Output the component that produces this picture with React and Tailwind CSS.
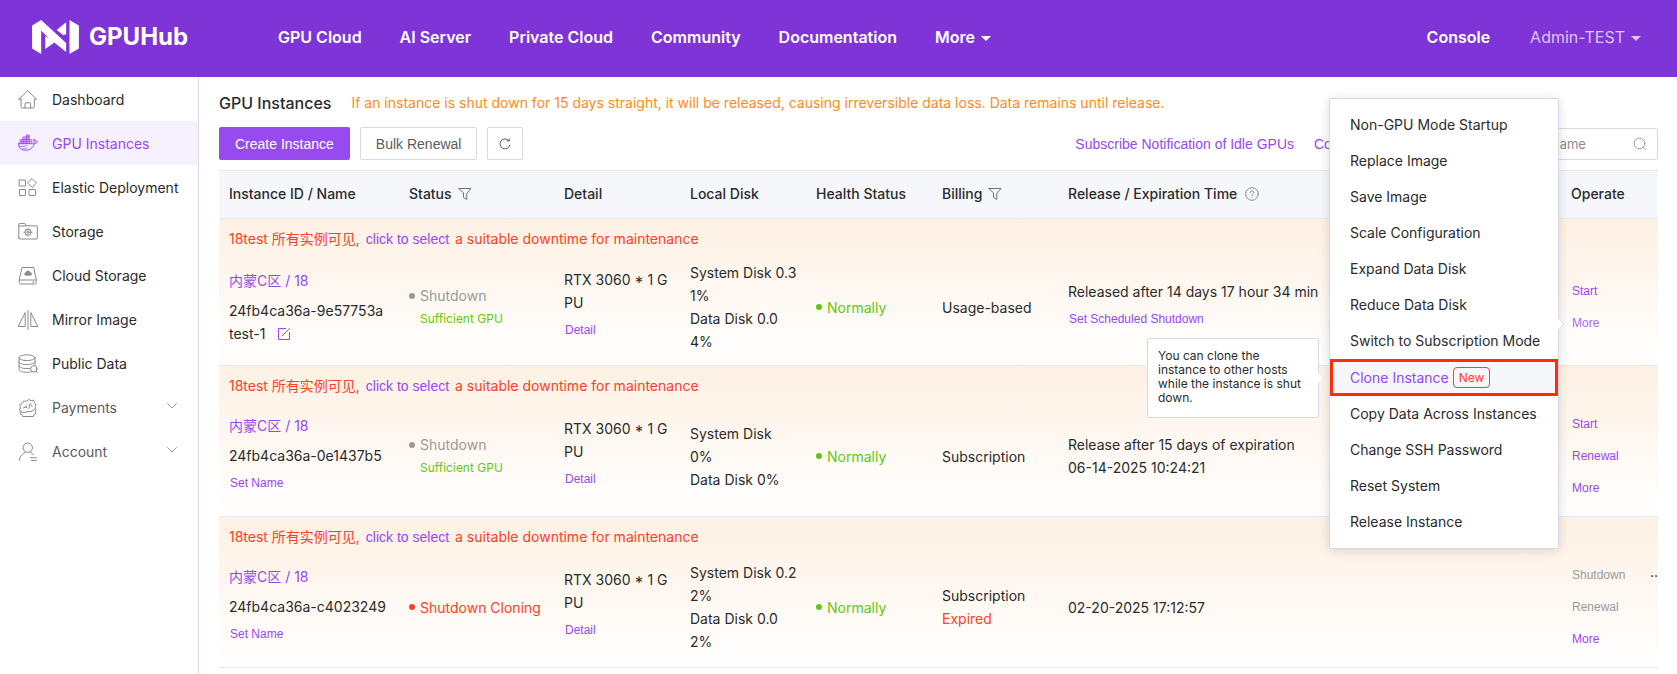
import React from "react";

const sans = "font-['Inter','Noto_Sans_CJK_SC',sans-serif]";
const link = "font-['Liberation_Sans',sans-serif] cursor-pointer";

function Icon({ children, className = "h-5 w-5", box = "0 0 20 20" }) {
  return (
    <svg viewBox={box} className={className} fill="none" stroke="currentColor" strokeWidth="1" strokeLinecap="round" strokeLinejoin="round" aria-hidden="true">
      {children}
    </svg>
  );
}

const HomeIcon = () => (
  <Icon>
    <path d="M.8 9.2 9.7.8l8.9 8.4H16.300v7.300a1.500 1.500 0 0 1-1.500 1.500H4.600A1.500 1.500 0 0 1 3.100 16.500V9.200Z" />
    <path d="M7 18v-4.200a1 1 0 0 1 1-1h3.600a1 1 0 0 1 1 1V18" />
  </Icon>
);

const DockerIcon = () => (
  <Icon>
    <path d="M.6 9.700h14.200c1 0 1.500-.6 1.400-1.500-.1-1-.6-1.600-.3-3 1 .5 1.500 1.200 1.600 2 .8-.2 1.600 0 2.100.5-.5 1.200-1.600 1.700-3 1.700C15 14 12 16.200 7.600 16.200c-4.700 0-7.200-2.400-7-6.500Z" />
    <path d="M1 12.400c3 .4 5.500.3 7.500-.8M4.500 15c2 0 3.500-.5 4.500-1.500" strokeWidth=".7" />
    <path d="M2.500 5.500h9v3.700h-9Z M5.200 3h6v2.500h-6Z M8.700 1h2.500v2H8.700Z" fill="currentColor" fillOpacity=".45" strokeWidth=".7" />
    <path d="M2.500 7.400h11.300v1.800M5.200 5.500v3.700M8.400 3v6.200M11.500 5.500h2.300v2" strokeWidth=".7" />
  </Icon>
);

const ElasticIcon = () => (
  <Icon>
    <rect x="1.500" y="2" width="6" height="6" />
    <path d="m14.200.8 4.300 4.300-4.300 4.300-4.300-4.300Z" />
    <rect x="1.500" y="11.500" width="6" height="6" rx=".5" />
    <rect x="11" y="11.500" width="6.500" height="6" rx=".5" />
  </Icon>
);

const StorageIcon = () => (
  <Icon>
    <path d="M.8 16V2.500a1 1 0 0 1 1-1h5l1.500 2.300h10a1 1 0 0 1 1 1V16a1 1 0 0 1-1 1H1.800a1 1 0 0 1-1-1ZM.8 4h7.500" />
    <circle cx="10" cy="10.300" r="3" />
    <circle cx="10" cy="10.300" r="1.100" />
    <path d="M10 6.300v1M10 13.300v1M6 10.300h1M13 10.300h1M7.200 7.500l.7.700M12.100 12.400l.7.700M12.800 7.500l-.7.700M7.900 12.400l-.7.700" />
  </Icon>
);

const DiskIcon = () => (
  <Icon>
    <path d="M4.500 1.500h11.200l2.500 12v3a1.500 1.500 0 0 1-1.500 1.500H2.800a1.500 1.500 0 0 1-1.500-1.500v-3Z" />
    <path d="M1.500 14h16.500M14.500 16.200h1.500" />
    <path d="M7.500 9.500a1.600 1.600 0 0 1 .2-3.100 2.600 2.600 0 0 1 4.800 0 1.600 1.600 0 0 1 .2 3.100Z" fill="currentColor" strokeWidth=".3" />
  </Icon>
);

const MirrorIcon = () => (
  <Icon>
    <path d="M7.200 3v13.500H.6ZM10 .5v19M12.800 3v13.500h6.600Z" />
  </Icon>
);

const DataIcon = () => (
  <Icon>
    <ellipse cx="9" cy="3.700" rx="8" ry="2.900" />
    <path d="M1 3.700v12c0 1.600 3.600 2.600 8 2.600 1.700 0 3-.1 4.200-.4M17 3.700v7.500M1 7.700c0 1.600 3.600 2.900 8 2.900s8-1.300 8-2.900M1 11.700c0 1.600 3.600 2.900 8 2.900 1.200 0 2.400-.1 3.400-.3" />
    <circle cx="15.800" cy="14.800" r="3.200" />
    <path d="m18 17.200 1.500 1.500" />
  </Icon>
);

const PaymentsIcon = () => (
  <Icon>
    <path d="m2 6.500 2.500-1.200 1-2.300 2.800.3L10.800 1.500l2.300 1.200 2.500-.5.8 2.500 1.600 1.500-.8 2.500.5 2-2.200 1-1.500 1.600-3.500.2-5.700 1.300L3 13.500l-1.500-1 .8-2.800Z" />
    <path d="M3 13.500 2.500 16l2 1.200v1.300h11v-1.300l2-1.200-.3-2.500.8-1.800" />
    <path d="m10.800 10.500 1.400-5M5.500 9.800l3-1M8 7.800l.5 1.800M10 6.200h.1M13.400 7l.7 1.500" />
  </Icon>
);

const AccountIcon = () => (
  <Icon>
    <circle cx="9.800" cy="5.700" r="4.700" />
    <path d="M1.300 18.500c.6-4.400 3-7 5.900-8.200M12.500 10.300c1.300.6 2.300 1.500 3 2.600M12.500 15.800h6M13.500 18.500h5" />
  </Icon>
);

const FunnelIcon = () => (
  <Icon className="h-3.5 w-3.5 text-gray-500" box="0 0 14 14">
    <path d="M1 1.500h12L8.800 6.200v6.300L5.500 10.500V6.200Z" />
  </Icon>
);

const Caret = () => <span className="mt-0.5 border-x-5 border-t-5 border-x-transparent border-t-current" />;

const menu = [
  { label: "Dashboard", icon: HomeIcon },
  { label: "GPU Instances", icon: DockerIcon, active: true },
  { label: "Elastic Deployment", icon: ElasticIcon },
  { label: "Storage", icon: StorageIcon },
  { label: "Cloud Storage", icon: DiskIcon },
  { label: "Mirror Image", icon: MirrorIcon },
  { label: "Public Data", icon: DataIcon },
  { label: "Payments", icon: PaymentsIcon, group: true },
  { label: "Account", icon: AccountIcon, group: true },
];

const navLinks = ["GPU Cloud", "AI Server", "Private Cloud", "Community", "Documentation"];

const rows = [
  {
    id: "24fb4ca36a-9e57753a",
    name: "test-1",
    status: "Shutdown",
    available: true,
    disk: ["System Disk 0.3", "1%", "Data Disk 0.0", "4%"],
    billing: "Usage-based",
    release: ["Released after 14 days 17 hour 34 min"],
    schedule: true,
    actions: [{ label: "Start" }, { label: "More", open: true }],
  },
  {
    id: "24fb4ca36a-0e1437b5",
    status: "Shutdown",
    available: true,
    disk: ["System Disk", "0%", "Data Disk 0%"],
    billing: "Subscription",
    release: ["Release after 15 days of expiration", "06-14-2025 10:24:21"],
    actions: [{ label: "Start" }, { label: "Renewal" }, { label: "More" }],
  },
  {
    id: "24fb4ca36a-c4023249",
    status: "Shutdown Cloning",
    disk: ["System Disk 0.2", "2%", "Data Disk 0.0", "2%"],
    billing: "Subscription",
    expired: true,
    release: ["02-20-2025 17:12:57"],
    actions: [{ label: "Shutdown", disabled: true, overflow: true }, { label: "Renewal", disabled: true }, { label: "More" }],
  },
];

const operations = [
  "Non-GPU Mode Startup",
  "Replace Image",
  "Save Image",
  "Scale Configuration",
  "Expand Data Disk",
  "Reduce Data Disk",
  "Switch to Subscription Mode",
  "Clone Instance",
  "Copy Data Across Instances",
  "Change SSH Password",
  "Reset System",
  "Release Instance",
];

function Header() {
  return (
    <header className="flex h-[77px] items-center bg-[#7f34d8] pr-9 pb-[3px] pl-8 text-white">
      <a href="#" className="flex w-[246px] items-center gap-2.5 text-2xl font-bold">
        <svg viewBox="0 0 139 101" className="h-[34px] w-[47px]" fill="currentColor" aria-hidden="true">
          <path d="M0 16 27 0 101 68V95L66 67 39 86V48L50 55 27 31V101L0 85Z" />
          <path d="M101 7V42L93 45 73 30Z" />
          <path d="M111 0 139 16V85L111 101Z" />
        </svg>
        GPUHub
      </a>
      <nav className="flex flex-1 items-center gap-[38px] text-base font-semibold whitespace-nowrap">
        {navLinks.map((t) => (
          <a key={t} href="#">{t}</a>
        ))}
        <button type="button" className="flex items-center gap-1.5">
          More <Caret />
        </button>
      </nav>
      <div className="flex items-center gap-10 text-base">
        <a href="#" className="font-semibold">Console</a>
        <button type="button" className="flex items-center gap-1.5 text-[#dcc6f5]">
          Admin-TEST <Caret />
        </button>
      </div>
    </header>
  );
}

function Sidebar() {
  return (
    <aside className="w-[199px] shrink-0 border-r border-[#d9d9e3]">
      <ul>
        {menu.map(({ label, icon: ItemIcon, active, group }) => (
          <li key={label}>
            <a href="#" className={`flex h-11 items-center gap-3.5 pt-0.5 pr-5 pl-[18px] whitespace-nowrap ${active ? "bg-[#f7f0ff] text-[#9747f0]" : group ? "text-[#5c5c5c]" : "text-[#2b2b2b]"}`}>
              <span className={active ? "" : "text-[#8a8a8a]"}><ItemIcon /></span>
              <span>{label}</span>
              {group && (
                <Icon className="mb-1 ml-auto h-2 w-3 text-[#999]" box="0 0 12 8">
                  <path d="M1.500 1.500 6 6l4.500-4.500" />
                </Icon>
              )}
            </a>
          </li>
        ))}
      </ul>
    </aside>
  );
}

function OperationsMenu() {
  return (
    <div className="absolute -top-[209px] right-full z-10 mr-3 w-[230px] rounded-xs border border-[#d6d8e3] bg-white py-2 text-sm text-[#2b2b2b] shadow-[0_2px_12px_rgba(0,0,0,0.14)]">
      <span className="absolute top-[221px] -right-[5px] h-2 w-2 rotate-45 border-t border-r border-[#e2e2ea] bg-white" />
      <ul className={sans}>
        {operations.map((label) =>
          label === "Clone Instance" ? (
            <li key={label} className="relative">
              <button type="button" className="flex h-[37px] w-full items-center gap-1 border-3 border-[#ff2d0a] bg-[#f5f7fb] px-[17px] text-[#9747f0]">
                {label}
                <span className="rounded-sm border border-[#ff4026] px-[5px] text-xs leading-[19px] text-[#ff4026]">New</span>
              </button>
              <div role="tooltip" className="absolute top-1/2 right-full mr-[11px] w-[172px] -translate-y-1/2 rounded-xs border border-[#d6d8e3] bg-white p-2.5 pb-3 text-xs leading-[14px] whitespace-normal text-[#2b2b2b]">
                <span className="absolute top-1/2 -right-[5px] -mt-1 h-2 w-2 rotate-45 border-t border-r border-[#e2e2ea] bg-white" />
                You can clone the instance to other hosts while the instance is shut down.
              </div>
            </li>
          ) : (
            <li key={label}>
              <button type="button" className="flex h-9 w-full items-center px-5 whitespace-nowrap">{label}</button>
            </li>
          )
        )}
      </ul>
    </div>
  );
}

const textLink = `${link} block h-8 px-px text-xs text-[#9747f0]`;

function Dotted({ children, tone }) {
  return (
    <span className={`flex items-center gap-[5px] ${tone}`}>
      <span className="h-1.5 w-1.5 rounded-full bg-current" />
      {children}
    </span>
  );
}

function InstanceRows({ row }) {
  const td = "border-b border-[#e6e9f2] px-2.5 whitespace-nowrap";
  return (
    <tbody className="bg-linear-to-b from-[#fef1e4] to-white leading-[23px]">
      <tr>
        <td colSpan={8} className="h-[30px] px-2.5 pt-2.5 pb-0 leading-5 text-[#ff4026]">
          18test 所有实例可见,{" "}
          <a href="#" className={`${link} mx-0.5 text-[#9747f0]`}>click to select</a> a suitable downtime for maintenance
        </td>
      </tr>
      <tr>
        <td className={td}>
          <a href="#" className="mb-[7px] block text-[#9747f0]">内蒙C区 / 18</a>
          <div>{row.id}</div>
          {row.name ? (
            <div className="flex items-center gap-3">
              {row.name}
              <button type="button" aria-label="Edit name" className="text-[#9747f0]">
                <Icon className="h-3.5 w-3.5" box="0 0 14 14">
                  <path d="M8.500 1.500h-7v11h11v-7M5 9l7.500-7.500" />
                </Icon>
              </button>
            </div>
          ) : (
            <button type="button" className={textLink}>Set Name</button>
          )}
        </td>
        <td className={td}>
          <Dotted tone={row.available ? "text-[#999]" : "text-[#ff4026]"}>{row.status}</Dotted>
          {row.available && <div className="pl-[11px] text-xs leading-[23px] text-[#5fc814]">Sufficient GPU</div>}
        </td>
        <td className={td}>
          <div>RTX 3060 * 1 G<br />PU</div>
          <button type="button" className={textLink}>Detail</button>
        </td>
        <td className={`${td} py-3`}>
          {row.disk.map((line) => (
            <div key={line}>{line}</div>
          ))}
        </td>
        <td className={td}><Dotted tone="text-[#5fc814]">Normally</Dotted></td>
        <td className={td}>
          <div>{row.billing}</div>
          {row.expired && <div className="text-[#ff4026]">Expired</div>}
        </td>
        <td className={td}>
          {row.release.map((line) => (
            <div key={line}>{line}</div>
          ))}
          {row.schedule && <button type="button" className={textLink}>Set Scheduled Shutdown</button>}
        </td>
        <td className={`${td} py-3 pr-0`}>
          {row.actions.map((a) => (
            <div key={a.label} className="relative flex items-center justify-between">
              <button type="button" disabled={a.disabled} className={`${link} h-8 px-px text-xs ${a.disabled ? "text-[#999]" : a.open ? "text-[#ac6cf3]" : "text-[#9747f0]"}`}>
                {a.label}
              </button>
              {a.overflow && <span>··</span>}
              {a.open && <OperationsMenu />}
            </div>
          ))}
        </td>
      </tr>
    </tbody>
  );
}

function InstanceTable() {
  const th = "h-[49px] border-y border-[#e6e9f2] px-2.5 pb-0.5 text-left font-medium whitespace-nowrap";
  return (
    <table className="mt-2.5 w-full table-fixed border-separate border-spacing-0">
      <colgroup>
        <col className="w-[180px]" />
        <col className="w-[155px]" />
        <col className="w-[126px]" />
        <col className="w-[126px]" />
        <col className="w-[126px]" />
        <col className="w-[126px]" />
        <col />
        <col className="w-[97px]" />
      </colgroup>
      <thead className="bg-[#f5f7fb]">
        <tr>
          <th className={th}>Instance ID / Name</th>
          <th className={th}><span className="flex items-center gap-1.5">Status <FunnelIcon /></span></th>
          <th className={th}>Detail</th>
          <th className={th}>Local Disk</th>
          <th className={th}>Health Status</th>
          <th className={th}><span className="flex items-center gap-1.5">Billing <FunnelIcon /></span></th>
          <th className={th}>
            <span className="flex items-center gap-2">
              Release / Expiration Time
              <Icon className="h-3.5 w-3.5 text-[#8a8a8a]" box="0 0 14 14">
                <circle cx="7" cy="7" r="6.300" />
                <path d="M5.200 5.500a1.800 1.800 0 1 1 2.700 1.600c-.6.4-.9.700-.9 1.300M7 10.300h.1" />
              </Icon>
            </span>
          </th>
          <th className={th}>Operate</th>
        </tr>
      </thead>
      {rows.map((row) => (
        <InstanceRows key={row.id} row={row} />
      ))}
    </table>
  );
}

export default function App() {
  return (
    <div className={`${sans} flex min-h-screen flex-col bg-white text-sm text-[#2b2b2b]`}>
      <Header />
      <div className="flex flex-1">
        <Sidebar />
        <main className="min-w-0 flex-1 pt-3 pr-[19px] pl-5">
          <div className="flex h-7 items-center gap-5">
            <h1 className="text-base font-medium">GPU Instances</h1>
            <p className="text-[#fa8c1e]">
              If an instance is shut down for 15 days straight, it will be released, causing irreversible data loss. Data remains until release.
            </p>
          </div>
          <div className="mt-2.5 flex h-[33px] items-center gap-2.5">
            <button type="button" className={`${link} h-full rounded-xs bg-[#974bee] px-4 text-white`}>Create Instance</button>
            <button type="button" className={`${link} h-full rounded-xs border border-[#d6d8e3] px-[15px] text-[#5c5c5c]`}>Bulk Renewal</button>
            <button type="button" aria-label="Refresh" className="flex h-full w-9 items-center justify-center rounded-xs border border-[#d6d8e3] text-[#5c5c5c]">
              <Icon className="h-3.5 w-3.5" box="0 0 14 14">
                <path d="M11.800 8.200A5 5 0 1 1 10.700 3.500M11.300 1.800v2.200H9.100" />
              </Icon>
            </button>
            <div className="ml-auto flex h-full items-center">
              <a href="#" className={`${link} mr-5 text-[#9747f0]`}>Subscribe Notification of Idle GPUs</a>
              <a href="#" className={`${link} w-[146px] text-[#9747f0]`}>Contact Support</a>
              <label className="flex h-8 w-[198px] items-center self-end rounded-xs border border-[#d6d8e3] pr-2.5 pl-2">
                <input type="text" aria-label="Search" placeholder="Instance ID / Name" className="min-w-0 flex-1 text-[13px] outline-none placeholder:text-[#8c8c8c]" />
                <Icon className="h-3.5 w-3.5 text-[#999]" box="0 0 14 14">
                  <circle cx="6.500" cy="6.500" r="5.300" />
                  <path d="m10.500 10.500 2 2" />
                </Icon>
              </label>
            </div>
          </div>
          <InstanceTable />
        </main>
      </div>
    </div>
  );
}
